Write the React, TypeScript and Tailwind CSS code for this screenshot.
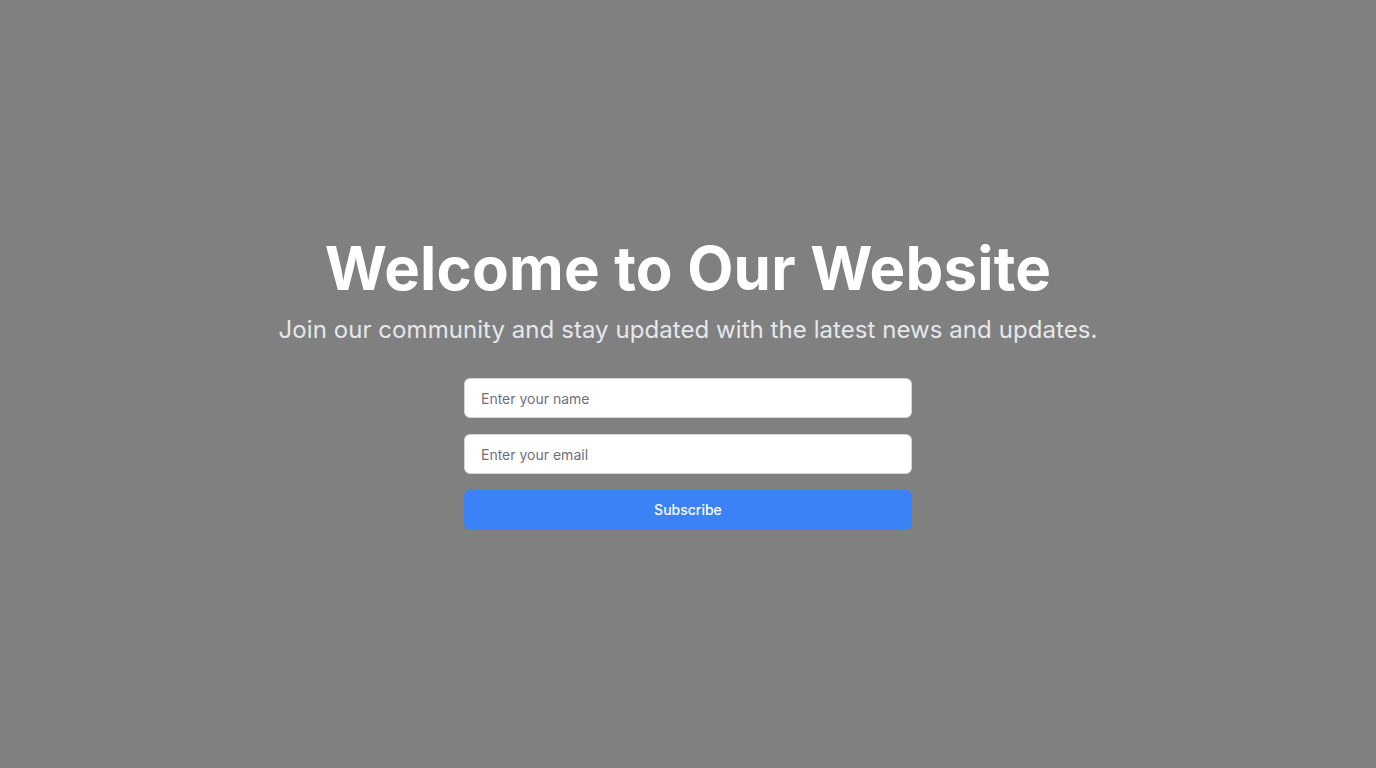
import React, { useState } from 'react';

export default function App() {
  const [name, setName] = useState('');
  const [email, setEmail] = useState('');

  return (
    <div className="min-h-screen w-full bg-[#808080] flex items-center justify-center font-['Inter',sans-serif]">
      <div className="flex flex-col items-center text-center">
        <h1 className="text-6xl font-bold text-white mb-4 tracking-[0.003em]">Welcome to Our Website</h1>
        <p className="text-2xl text-[#e5e7eb] mb-8 tracking-[0.0025em]">
          Join our community and stay updated with the latest news and updates.
        </p>
        <form className="w-[448px] flex flex-col gap-4" onSubmit={(e) => e.preventDefault()}>
          <input
            type="text"
            placeholder="Enter your name"
            value={name}
            onChange={(e) => setName(e.target.value)}
            className="h-10 w-full bg-white border border-[#d1d5db] rounded-md px-4 text-sm text-[#1f2937] placeholder-[#6b7280] focus:outline-none"
          />
          <input
            type="email"
            placeholder="Enter your email"
            value={email}
            onChange={(e) => setEmail(e.target.value)}
            className="h-10 w-full bg-white border border-[#d1d5db] rounded-md px-4 text-sm text-[#1f2937] placeholder-[#6b7280] focus:outline-none"
          />
          <button
            type="submit"
            className="h-10 w-full bg-[#3b82f6] text-white text-sm font-medium rounded-md hover:bg-[#2563eb]"
          >
            Subscribe
          </button>
        </form>
      </div>
    </div>
  );
}
